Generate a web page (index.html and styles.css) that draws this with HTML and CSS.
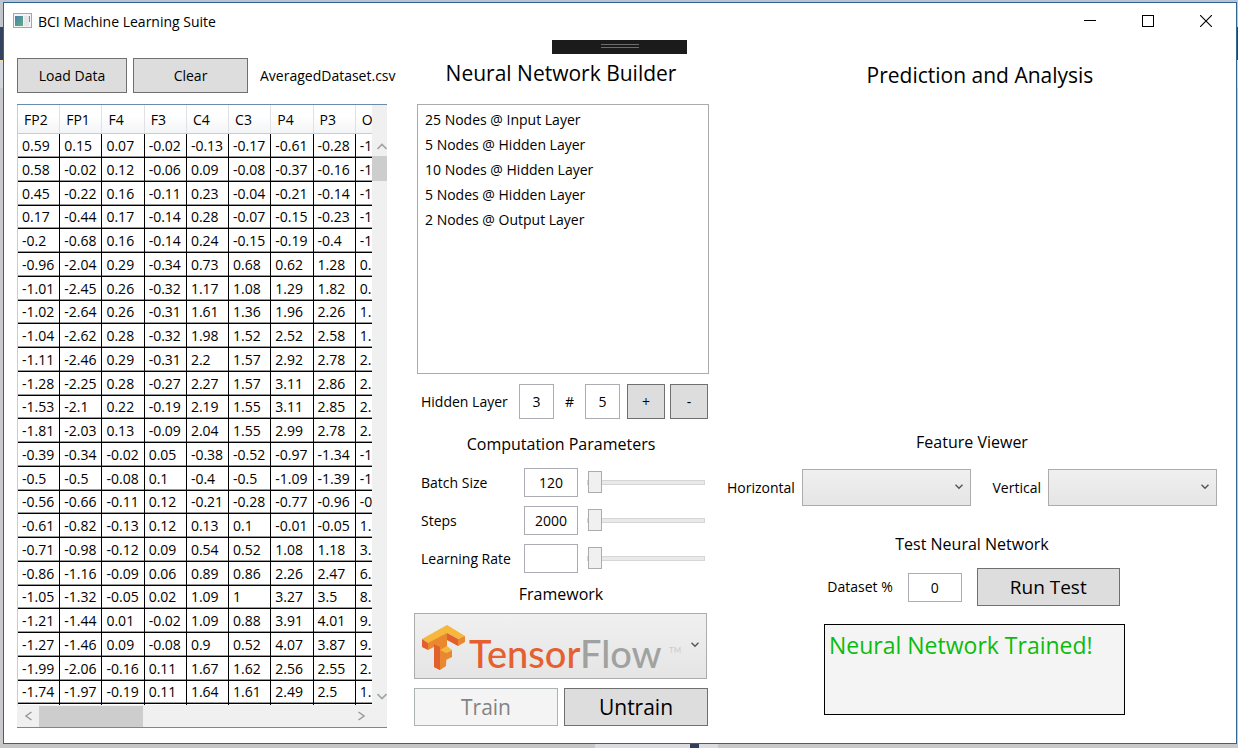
FILE: index.html
```html
<!DOCTYPE html>
<html lang="en">
<head>
<meta charset="utf-8">
<title>BCI Machine Learning Suite</title>
<link rel="stylesheet" href="styles.css">
</head>
<body>
<div class="window">
  <header class="titlebar">
    <svg class="app-icon" width="19" height="16" viewBox="0 0 19 16" aria-hidden="true">
      <defs><linearGradient id="pane" x1="0" y1="0" x2="1" y2="1"><stop offset="0" stop-color="#4b7fb0"/><stop offset="1" stop-color="#5fae7c"/></linearGradient></defs>
      <rect x="0.5" y="0.5" width="18" height="14" fill="#f4f4f6" stroke="#a3a7ad"/>
      <rect x="2" y="3" width="8" height="10" fill="url(#pane)"/>
      <rect x="11" y="3" width="5" height="10" fill="#e4e6ea"/>
      <rect x="16" y="3" width="1" height="6" fill="#5b9c93"/>
    </svg>
    <span class="title">BCI Machine Learning Suite</span>
    <div class="window-controls">
      <button class="control" aria-label="Minimize"><svg width="12" height="12" viewBox="0 0 12 12"><path d="M0 5.5H12" stroke="#000"/></svg></button>
      <button class="control" aria-label="Maximize"><svg width="12" height="12" viewBox="0 0 12 12"><rect x="0.5" y="0.5" width="11" height="11" fill="none" stroke="#000"/></svg></button>
      <button class="control" aria-label="Close"><svg width="12" height="12" viewBox="0 0 12 12"><path d="M0 0L12 12M12 0L0 12" stroke="#000" stroke-width="1.1"/></svg></button>
    </div>
  </header>
  <div class="debug-bar"><span class="grip"></span></div>
  <main class="panels">
    <section class="data-panel">
      <div class="data-tools">
        <button class="btn load">Load Data</button>
        <button class="btn clear">Clear</button>
        <span class="file-name">AveragedDataset.csv</span>
      </div>
      <div class="grid-box">
        <div class="grid-view">
          <table class="data-grid">
            <thead><tr><th>FP2</th><th>FP1</th><th>F4</th><th>F3</th><th>C4</th><th>C3</th><th>P4</th><th>P3</th><th>O</th></tr></thead>
            <tbody>
              <tr><td>0.59</td><td>0.15</td><td>0.07</td><td>-0.02</td><td>-0.13</td><td>-0.17</td><td>-0.61</td><td>-0.28</td><td>-1</td></tr>
              <tr><td>0.58</td><td>-0.02</td><td>0.12</td><td>-0.06</td><td>0.09</td><td>-0.08</td><td>-0.37</td><td>-0.16</td><td>-1</td></tr>
              <tr><td>0.45</td><td>-0.22</td><td>0.16</td><td>-0.11</td><td>0.23</td><td>-0.04</td><td>-0.21</td><td>-0.14</td><td>-1</td></tr>
              <tr><td>0.17</td><td>-0.44</td><td>0.17</td><td>-0.14</td><td>0.28</td><td>-0.07</td><td>-0.15</td><td>-0.23</td><td>-1</td></tr>
              <tr><td>-0.2</td><td>-0.68</td><td>0.16</td><td>-0.14</td><td>0.24</td><td>-0.15</td><td>-0.19</td><td>-0.4</td><td>-1</td></tr>
              <tr><td>-0.96</td><td>-2.04</td><td>0.29</td><td>-0.34</td><td>0.73</td><td>0.68</td><td>0.62</td><td>1.28</td><td>0.</td></tr>
              <tr><td>-1.01</td><td>-2.45</td><td>0.26</td><td>-0.32</td><td>1.17</td><td>1.08</td><td>1.29</td><td>1.82</td><td>0.</td></tr>
              <tr><td>-1.02</td><td>-2.64</td><td>0.26</td><td>-0.31</td><td>1.61</td><td>1.36</td><td>1.96</td><td>2.26</td><td>1.</td></tr>
              <tr><td>-1.04</td><td>-2.62</td><td>0.28</td><td>-0.32</td><td>1.98</td><td>1.52</td><td>2.52</td><td>2.58</td><td>1.</td></tr>
              <tr><td>-1.11</td><td>-2.46</td><td>0.29</td><td>-0.31</td><td>2.2</td><td>1.57</td><td>2.92</td><td>2.78</td><td>2.</td></tr>
              <tr><td>-1.28</td><td>-2.25</td><td>0.28</td><td>-0.27</td><td>2.27</td><td>1.57</td><td>3.11</td><td>2.86</td><td>2.</td></tr>
              <tr><td>-1.53</td><td>-2.1</td><td>0.22</td><td>-0.19</td><td>2.19</td><td>1.55</td><td>3.11</td><td>2.85</td><td>2.</td></tr>
              <tr><td>-1.81</td><td>-2.03</td><td>0.13</td><td>-0.09</td><td>2.04</td><td>1.55</td><td>2.99</td><td>2.78</td><td>2.</td></tr>
              <tr><td>-0.39</td><td>-0.34</td><td>-0.02</td><td>0.05</td><td>-0.38</td><td>-0.52</td><td>-0.97</td><td>-1.34</td><td>-1</td></tr>
              <tr><td>-0.5</td><td>-0.5</td><td>-0.08</td><td>0.1</td><td>-0.4</td><td>-0.5</td><td>-1.09</td><td>-1.39</td><td>-1</td></tr>
              <tr><td>-0.56</td><td>-0.66</td><td>-0.11</td><td>0.12</td><td>-0.21</td><td>-0.28</td><td>-0.77</td><td>-0.96</td><td>-0</td></tr>
              <tr><td>-0.61</td><td>-0.82</td><td>-0.13</td><td>0.12</td><td>0.13</td><td>0.1</td><td>-0.01</td><td>-0.05</td><td>1.</td></tr>
              <tr><td>-0.71</td><td>-0.98</td><td>-0.12</td><td>0.09</td><td>0.54</td><td>0.52</td><td>1.08</td><td>1.18</td><td>3.</td></tr>
              <tr><td>-0.86</td><td>-1.16</td><td>-0.09</td><td>0.06</td><td>0.89</td><td>0.86</td><td>2.26</td><td>2.47</td><td>6.</td></tr>
              <tr><td>-1.05</td><td>-1.32</td><td>-0.05</td><td>0.02</td><td>1.09</td><td>1</td><td>3.27</td><td>3.5</td><td>8.</td></tr>
              <tr><td>-1.21</td><td>-1.44</td><td>0.01</td><td>-0.02</td><td>1.09</td><td>0.88</td><td>3.91</td><td>4.01</td><td>9.</td></tr>
              <tr><td>-1.27</td><td>-1.46</td><td>0.09</td><td>-0.08</td><td>0.9</td><td>0.52</td><td>4.07</td><td>3.87</td><td>9.</td></tr>
              <tr><td>-1.99</td><td>-2.06</td><td>-0.16</td><td>0.11</td><td>1.67</td><td>1.62</td><td>2.56</td><td>2.55</td><td>2.</td></tr>
              <tr><td>-1.74</td><td>-1.97</td><td>-0.19</td><td>0.11</td><td>1.64</td><td>1.61</td><td>2.49</td><td>2.5</td><td>1.</td></tr>
              <tr><td></td><td></td><td></td><td></td><td></td><td></td><td></td><td></td><td></td></tr>
            </tbody>
          </table>
        </div>
        <div class="vscroll">
          <svg width="10" height="7" viewBox="0 0 10 7"><path d="M0.5 6L5 1.5L9.5 6" fill="none" stroke="#a3a3a3" stroke-width="1.6"/></svg>
          <span class="vthumb"></span>
          <svg class="scroll-end" width="10" height="7" viewBox="0 0 10 7"><path d="M0.5 1L5 5.5L9.5 1" fill="none" stroke="#a3a3a3" stroke-width="1.6"/></svg>
        </div>
        <div class="hscroll">
          <svg width="7" height="10" viewBox="0 0 7 10"><path d="M6.5 1L1 5L6.5 9" fill="none" stroke="#999" stroke-width="1.4"/></svg>
          <span class="hthumb"></span>
          <svg class="scroll-end" width="7" height="10" viewBox="0 0 7 10"><path d="M0.5 1L6 5L0.5 9" fill="none" stroke="#999" stroke-width="1.4"/></svg>
        </div>
      </div>
    </section>

    <section class="builder-panel">
      <h1 class="heading">Neural Network Builder</h1>
      <ul class="layer-list">
        <li>25 Nodes @ Input Layer</li>
        <li>5 Nodes @ Hidden Layer</li>
        <li>10 Nodes @ Hidden Layer</li>
        <li>5 Nodes @ Hidden Layer</li>
        <li>2 Nodes @ Output Layer</li>
      </ul>
      <div class="hidden-row">
        <label class="hidden-label" for="layer">Hidden Layer</label>
        <input class="field small" id="layer" type="text" value="3">
        <label class="hash" for="count">#</label>
        <input class="field small" id="count" type="text" value="5">
        <button class="btn step plus">+</button>
        <button class="btn step">-</button>
      </div>
      <h2 class="subheading">Computation Parameters</h2>
      <div class="params">
        <label for="batch">Batch Size</label>
        <input class="field" id="batch" type="text" value="120">
        <input class="slider" type="range" aria-label="Batch Size" min="0" max="100" value="0">
        <label for="steps">Steps</label>
        <input class="field" id="steps" type="text" value="2000">
        <input class="slider" type="range" aria-label="Steps" min="0" max="100" value="0">
        <label for="rate">Learning Rate</label>
        <input class="field" id="rate" type="text" value="">
        <input class="slider" type="range" aria-label="Learning Rate" min="0" max="100" value="0">
      </div>
      <h2 class="subheading framework-title">Framework</h2>
      <div class="combo framework">
        <select class="select" aria-label="Framework"><option></option></select>
        <svg class="logo" width="264" height="56" viewBox="0 0 264 56" aria-hidden="true">
          <path d="M12 22L31 12V28L30 46L24 50L18 47V27L12 30Z" fill="#e9882f"/>
          <path d="M6 19L31 5L49 16L42 19L31 13L12 23Z" fill="#f5b83d"/>
          <path d="M6 19L12 23V30L6 27ZM18 24L24 27V50L18 47ZM31 13L42 19V26L31 20Z" fill="#e25f2e"/>
          <path d="M42 19L49 16V22L42 26ZM30 33L36 30V37L30 40Z" fill="#e9882f"/>
          <path d="M24 30L31 26L36 30L30 33Z" fill="#f5b83d"/>
          <text class="logo-text" x="53" y="48"><tspan fill="#e55f30">Tensor</tspan><tspan fill="#9fa2a0">Flow</tspan></text>
          <text class="logo-mark" x="253" y="33">TM</text>
        </svg>
        <svg class="chevron" width="8" height="6" viewBox="0 0 8 6"><path d="M0.5 0.8L4 4.3L7.5 0.8" fill="none" stroke="#555" stroke-width="1.5"/></svg>
      </div>
      <div class="train-row">
        <button class="btn large" disabled>Train</button>
        <button class="btn large">Untrain</button>
      </div>
    </section>

    <section class="analysis-panel">
      <h1 class="heading">Prediction and Analysis</h1>
      <div class="plot-area"></div>
      <h2 class="subheading">Feature Viewer</h2>
      <div class="feature-row">
        <label for="horizontal">Horizontal</label>
        <div class="combo axis">
          <select class="select" id="horizontal"><option></option></select>
          <svg class="chevron" width="8" height="6" viewBox="0 0 8 6"><path d="M0.5 0.8L4 4.3L7.5 0.8" fill="none" stroke="#555" stroke-width="1.5"/></svg>
        </div>
        <label class="vertical-label" for="vertical">Vertical</label>
        <div class="combo axis">
          <select class="select" id="vertical"><option></option></select>
          <svg class="chevron" width="8" height="6" viewBox="0 0 8 6"><path d="M0.5 0.8L4 4.3L7.5 0.8" fill="none" stroke="#555" stroke-width="1.5"/></svg>
        </div>
      </div>
      <h2 class="subheading test-title">Test Neural Network</h2>
      <div class="test-row">
        <label for="percent">Dataset %</label>
        <input class="field" id="percent" type="text" value="0">
        <button class="btn run">Run Test</button>
      </div>
      <output class="status">Neural Network Trained!</output>
    </section>
  </main>
</div>
</body>
</html>
```
FILE: styles.css
```css
* {
  box-sizing: border-box;
}

body {
  margin: 0;
  min-height: 100vh;
  display: flex;
  padding: 2px 1px 4px 3px;
  background:
    linear-gradient(#b9c2d6, #b9c2d6) 0 0 / 100% 2px no-repeat,
    linear-gradient(90deg, #c6c6c6 595px, #dcdce0 595px 690px, #343f5b 690px 699px, #dcdce0 699px 718px, #c9c9c9 718px) 0 100% / 100% 4px no-repeat,
    linear-gradient(#c2c5cc 27px, #33425f 27px 60px, #efdc98 60px 62px, #d3d6dd 62px 88px, #c9cacd 88px) 0 0 / 100% 100%;
  color: #000;
  font: 14px/20px "Open Sans", "Noto Sans", sans-serif;
}

h1, h2, ul {
  margin: 0;
  padding: 0;
  font-weight: 400;
  list-style: none;
}

button, input, select {
  margin: 0;
  font: inherit;
  color: inherit;
}

.window {
  position: relative;
  flex: 1;
  min-width: 0;
  display: flex;
  flex-direction: column;
  border: 1px solid #2f6690;
  background: #fff;
}

.titlebar {
  display: flex;
  align-items: center;
  height: 36px;
  padding: 0 1px 0 9px;
}

.title {
  margin-left: 6px;
  line-height: 18px;
  padding-top: 2px;
}

.window-controls {
  display: flex;
  margin-left: auto;
}

.control {
  display: grid;
  place-items: center;
  width: 58px;
  height: 36px;
  padding: 0;
  border: 0;
  background: none;
}

.debug-bar {
  position: absolute;
  top: 37px;
  left: 50%;
  width: 135px;
  height: 14px;
  margin-left: -68px;
  background: #1b1b1b;
}

.grip {
  display: block;
  width: 38px;
  height: 4px;
  margin: 4px auto;
  border: solid #6d6d6d;
  border-width: 1px 0;
}

.panels {
  flex: 1;
  display: grid;
  grid-template-columns: minmax(0, 370fr) minmax(0, 302fr) minmax(0, 490fr);
  gap: 19px;
  padding: 16px 19px 15px 13px;
}

.data-panel {
  display: flex;
  flex-direction: column;
  min-height: 0;
}

.data-tools {
  display: flex;
  align-items: center;
  gap: 6px;
  padding-top: 3px;
}

.btn {
  flex: none;
  padding: 0;
  border: 1px solid #707070;
  background: #ddd;
}

.btn:disabled {
  border-color: #adb2b5;
  background: #f4f4f4;
  color: #838383;
}

.load {
  width: 110px;
  height: 35px;
}

.clear {
  width: 115px;
  height: 35px;
}

.file-name {
  margin-left: 6px;
  white-space: nowrap;
}

.grid-box {
  display: grid;
  grid-template-columns: minmax(0, 1fr) 15px;
  grid-template-rows: 600px 22px;
  margin-top: 11px;
  border: solid #688caf;
  border-width: 1px 0;
}

.grid-view {
  overflow: hidden;
  border-left: 1px solid #ccc;
}

.data-grid {
  width: 380px;
  border-collapse: separate;
  border-spacing: 0;
  table-layout: fixed;
}

.data-grid th {
  height: 29px;
  padding: 2px 0 0 6px;
  border-right: 1px solid #dfe1e4;
  border-bottom: 1px solid #ccc;
  background: linear-gradient(#fff 40%, #f3f4f6);
  font-weight: 400;
  text-align: left;
}

.data-grid td {
  height: 24px;
  padding: 0 0 0 4px;
  border-right: 1px solid #000;
  border-bottom: 1px solid #000;
  box-shadow: inset 0 -1px #999;
  line-height: 20px;
  white-space: nowrap;
}

.data-grid tr:nth-child(4n) td {
  height: 23px;
}

.vscroll {
  grid-row: span 2;
  display: flex;
  flex-direction: column;
  align-items: center;
  padding: 38px 0 27px;
  overflow: hidden;
  background: #f0f0f0;
}

.vscroll svg {
  flex: none;
  align-self: flex-end;
}

.vthumb {
  width: 100%;
  height: 25px;
  margin-top: 6px;
  background: #cdcdcd;
}

.vscroll .scroll-end {
  margin-top: auto;
}

.hscroll {
  display: flex;
  align-items: center;
  padding: 0 7px 0 8px;
  background: #f0f0f0;
}

.hthumb {
  width: 104px;
  height: 21px;
  margin-left: 7px;
  background: #cdcdcd;
}

.hscroll .scroll-end {
  margin-left: auto;
}

.builder-panel {
  padding-left: 8px;
}

.heading {
  font-size: 21px;
  line-height: 36px;
  text-align: center;
}

.layer-list {
  height: 270px;
  margin: 13px -1px 0 3px;
  padding: 2px 7px;
  border: 1px solid #ababab;
  line-height: 25px;
}

.hidden-row {
  display: flex;
  align-items: center;
  height: 35px;
  margin-top: 10px;
  padding-left: 7px;
}

.hidden-label {
  flex: 1;
}

.field {
  width: 54px;
  height: 29px;
  padding: 0;
  border: 1px solid #abadb3;
  border-radius: 0;
  background: #fff;
  text-align: center;
}

.small {
  width: 35px;
  height: 35px;
}

.hash {
  width: 31px;
  text-align: center;
}

.step {
  width: 38px;
  height: 35px;
  margin-left: 5px;
}

.plus {
  margin-left: 7px;
}

.subheading {
  font-size: 16px;
  line-height: 24px;
  text-align: center;
}

.builder-panel .subheading {
  margin-top: 13px;
}

.params {
  display: grid;
  grid-template-columns: minmax(0, 1fr) 54px 118px;
  align-items: center;
  gap: 9px;
  margin-top: 12px;
  padding: 0 3px 0 7px;
}

.params .slider {
  width: 118px;
}

.slider {
  height: 22px;
  margin: 0;
  appearance: none;
  background: none;
}

.slider::-webkit-slider-runnable-track {
  height: 5px;
  border: 1px solid #d6d6d6;
  background: #e7eaea;
}

.slider::-webkit-slider-thumb {
  appearance: none;
  width: 14px;
  height: 22px;
  margin-top: -10px;
  border: 1px solid #acacac;
  background: #f0f0f0;
}

.builder-panel .framework-title {
  margin-top: 9px;
}

.combo {
  position: relative;
}

.select {
  display: block;
  width: 100%;
  height: 100%;
  padding: 0;
  appearance: none;
  border: 1px solid #acacac;
  border-radius: 0;
  background: linear-gradient(#f0f0f0, #e5e5e5);
}

.chevron {
  position: absolute;
  top: 50%;
  right: 8px;
  margin-top: -4px;
  pointer-events: none;
}

.framework {
  height: 66px;
  margin: 7px 1px 0 0;
}

.logo {
  position: absolute;
  top: 7px;
  left: 2px;
  overflow: visible;
  pointer-events: none;
}

.logo-text {
  font: 500 38px Lato, sans-serif;
}

.logo-mark {
  fill: #ccc;
  font: 8px Lato, sans-serif;
}

.train-row {
  display: grid;
  grid-template-columns: 1fr 1fr;
  gap: 6px;
  margin-top: 9px;
}

.large {
  height: 38px;
  font-size: 21px;
}

.analysis-panel {
  display: flex;
  flex-direction: column;
  padding-top: 2px;
}

.analysis-panel .heading {
  padding-left: 16px;
}

.plot-area {
  height: 337px;
}

.feature-row {
  display: flex;
  align-items: center;
  gap: 7px;
  margin-top: 15px;
}

.axis {
  flex: 0 1 169px;
  height: 37px;
}

.vertical-label {
  margin-left: auto;
}

.test-title {
  margin-top: 26px;
}

.test-row {
  display: flex;
  align-items: center;
  justify-content: center;
  gap: 15px;
  margin-top: 12px;
  padding-left: 3px;
}

.run {
  width: 143px;
  height: 38px;
  font-size: 19px;
}

.status {
  width: 301px;
  height: 91px;
  margin: 18px 0 0 97px;
  padding: 3px 4px;
  border: 1px solid #000;
  background: #f4f4f4;
  color: #0cbc0c;
  font-size: 23px;
  line-height: 34px;
}
```
